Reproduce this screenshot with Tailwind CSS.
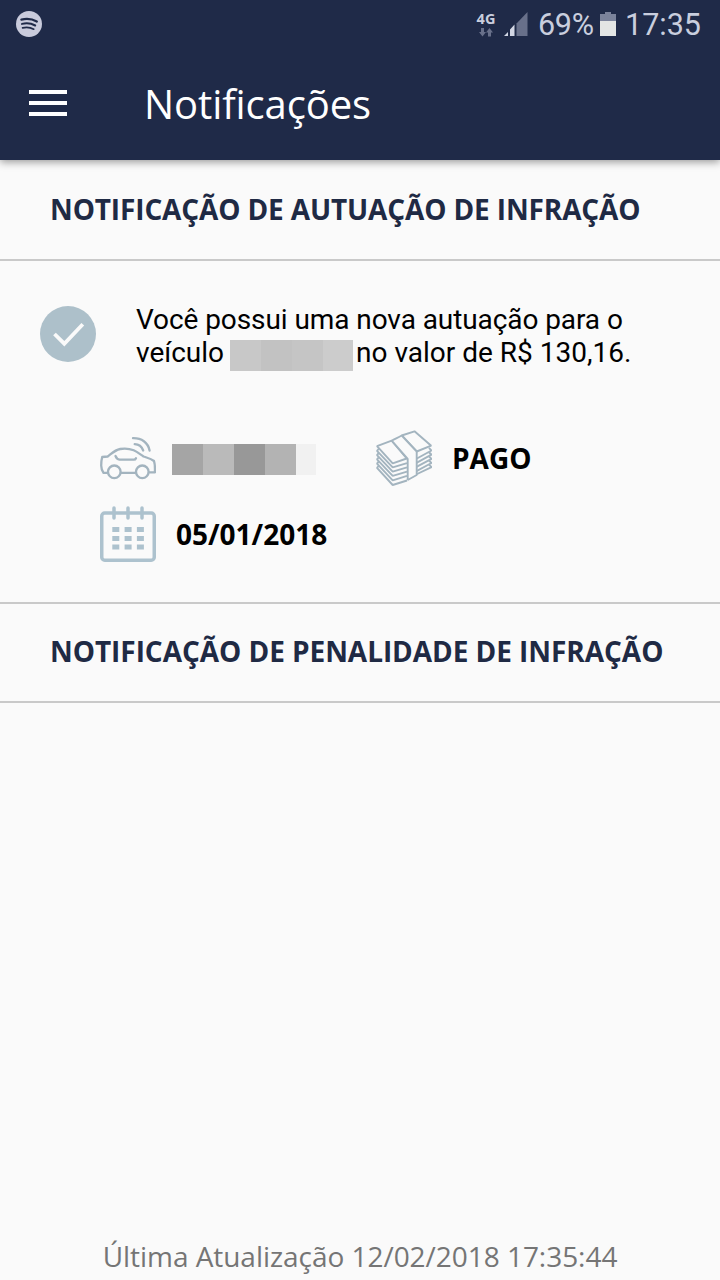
<!DOCTYPE html>
<html lang="pt-BR">
<head>
<meta charset="utf-8">
<title>Notificações</title>
<script src="https://cdn.jsdelivr.net/npm/@tailwindcss/browser@4"></script>
</head>
<body class="bg-[#fafafa]">
<div class="flex h-[1280px] w-[720px] flex-col overflow-hidden bg-[#fafafa] font-['Open_Sans',sans-serif] text-black">
  <header class="z-10 h-40 shrink-0 bg-[#1f2a48] shadow-[0_2px_8px_rgba(0,0,0,0.4)]">
    <div class="flex h-12 items-center justify-between pl-4 pr-[19px] font-['Roboto',sans-serif] text-[#c9cede]">
      <svg class="size-[26px]" viewBox="0 0 26 26" fill="none" stroke="#1f2a48" stroke-linecap="round">
        <circle cx="13" cy="13" r="13" fill="#c9cbdc" stroke="none"/>
        <path d="M5.4 8.6c5.5-1.3 10.6-.8 15.4 1.9" stroke-width="2.3"/>
        <path d="M6 12.9c4.8-1.2 9-.7 13.2 1.6" stroke-width="2"/>
        <path d="M6.6 16.8c4.2-.9 7.8-.5 11.2 1.4" stroke-width="1.7"/>
      </svg>
      <div class="flex h-12 items-center">
        <div class="mr-2 flex w-5 flex-col items-center">
          <span class="text-[14.500px] font-bold leading-[14px] font-['Open_Sans',sans-serif]">4G</span>
          <svg class="mt-[2px] h-[9px] w-[14px]" viewBox="0 0 14 9" fill="#68708a"><path d="M2 0h3v4h2L3.500 8.500 0 4h2zM9 8.500h3v-4h2L10.500 0 7 4.500h2z"/></svg>
        </div>
        <svg class="h-6 w-6" viewBox="0 0 24 24"><path d="M0 24l4-4v4zM6 24v-6.500l4.500-5V24z" fill="#d2d6e4"/><path d="M12.500 24V11.500L23.500 0v24z" fill="#68708a"/></svg>
        <span class="ml-2.5 mt-[2px] w-[56px] whitespace-nowrap text-[30.500px] leading-9 tracking-[-0.3px]">69%</span>
        <svg class="ml-1.5 h-6 w-4" viewBox="0 0 16 24"><path d="M5 0h6v2h5v7H0V2h5z" fill="#7b839b"/><path d="M0 9h16v15H0z" fill="#e3e5e4"/></svg>
        <span class="ml-[9px] mt-[2px] w-[76px] whitespace-nowrap text-[30.500px] leading-9">17:35</span>
      </div>
    </div>
    <div class="flex h-28 items-center pl-[29px]">
      <div class="mb-[2px] flex w-[38px] flex-col gap-[7px]">
        <span class="h-1 bg-white"></span><span class="h-1 bg-white"></span><span class="h-1 bg-white"></span>
      </div>
      <h1 class="ml-[77px] text-[40px] leading-[54px] tracking-[-0.1px] text-white">Notificações</h1>
    </div>
  </header>

  <h2 class="flex h-[101px] shrink-0 items-center border-b-2 border-[#c9c9c9] pb-[2px] pl-[50px] text-[28px] font-bold tracking-[-0.13px] text-[#1f2a44]">NOTIFICAÇÃO DE AUTUAÇÃO DE INFRAÇÃO</h2>

  <section class="h-[343px] shrink-0 border-b-2 border-[#c9c9c9] pl-10 pt-[42px]">
    <div class="flex">
      <svg class="mt-[3px] size-14 shrink-0" viewBox="0 0 56 56" fill="none"><circle cx="28" cy="28" r="28" fill="#adc0ca"/><path d="M14.500 28l9.800 9.700L42.800 18.200" stroke="#fafafa" stroke-width="3.800"/></svg>
      <div class="ml-10 whitespace-nowrap font-['Roboto',sans-serif] text-[28px] leading-[33px]">
        <p class="tracking-[-0.08px]">Você possui uma nova autuação para o</p>
        <p class="flex h-[33px]"><span class="w-[94px]">veículo</span><span class="mt-[4px] flex h-[31px] w-[123px]"><span class="w-[31px] bg-[#c8c8c8]"></span><span class="w-[31px] bg-[#c2c2c2]"></span><span class="w-[31px] bg-[#c5c5c5]"></span><span class="w-[30px] bg-[#cccccc]"></span></span><span class="ml-[3px]">no valor de R$ 130,16.</span></p>
      </div>
    </div>

    <div class="ml-[60px] mt-[60px] flex h-[60px] items-center">
      <svg class="h-[60px] w-14" viewBox="0 0 56 60" fill="none" stroke="#a3b4bf" stroke-width="2.300" stroke-linejoin="round" stroke-linecap="round">
        <path d="M7.500 43.800H3.500C2 41.500 1.200 39 1.200 36.500c0-3 .3-6 1-8.500l5.500-.5c3.500-2.500 7-6.500 12.500-7.500 5-.9 9.500-.3 13.500 1.300 3.500 1.500 6.500 4 9.800 6.200 3.500 1.200 7.500 2 10.500 4.500 1.200 3.500 1 7.500.9 11.300H49M21 43.800h14.500"/>
        <circle cx="14.300" cy="42.800" r="6.300"/><circle cx="42.300" cy="42.800" r="6.300"/>
        <path d="M15.500 27c.8 2 2 3.300 4 3.700H34c1 0 1.600-.6 2-1.500"/>
        <path d="M33 9.200c8.500-.2 15 4.300 16.600 12.300M34.700 15.200c4.300.1 7 2.200 8.500 6.300"/>
      </svg>
      <div class="ml-4 mt-px flex h-[31px] w-36"><span class="w-[31px] bg-[#a5a5a5]"></span><span class="w-[31px] bg-[#bababa]"></span><span class="w-[31px] bg-[#989898]"></span><span class="w-[31px] bg-[#b3b3b3]"></span><span class="w-5 bg-[#f1f1f1]"></span></div>
      <svg class="ml-[60px] h-[60px] w-14" viewBox="0 0 56 60" fill="#fafafa" stroke="#a3b4bf" stroke-width="1.900" stroke-linejoin="bevel">
        <path d="M3 36.500l-2 2.300L16.700 56 31 51.500M39 46l16.500-7.800-2.500-2.500"/>
        <path d="M3 32.200l-2 2.500 15.700 16.600L31 46.800M40 42.300L55.500 34l-2.500-2.500"/>
        <path d="M3 28l-2 2.400 15.700 16.500L31 42.600M40 38.200l15.500-8.300-2.500-2.500"/>
        <path d="M3 23.600l-2 2.500 15.700 16.500L31 38.400M40 34.100l15.500-8.400L53 23.300"/>
        <path d="M3 19.500l-2 2.300 15.700 16.600L31 34.100M40 30l15.500-8.500-2.500-2.700"/>
        <path d="M1 17.200l14.700-5.500L30.700 29.500 16.700 34.300z"/>
        <path d="M25.700 6.500L38.500 2.300 55.200 16.700 40.700 22.500z"/>
        <path d="M15.700 11.700c3.500-2 7-3.200 10-5.200L40.700 22.500V46L31.700 51V30z"/>
      </svg>
      <span class="mb-[2px] ml-5 text-[28px] font-bold">PAGO</span>
    </div>

    <div class="ml-[60px] mt-4 flex h-[58px] items-center">
      <svg class="h-14 w-14" viewBox="0 0 56 56" fill="none" stroke="#adc2ce" stroke-width="3.500" stroke-linecap="round">
        <rect x="1.750" y="7" width="52.500" height="47.250" rx="3"/>
        <path d="M14 2v10M28 2v10M42 2v10"/>
        <path d="M12.300 23.500h32M12.300 32.500h32M12.300 41h32" stroke-width="5" stroke-linecap="butt" stroke-dasharray="7 5.300"/>
      </svg>
      <span class="ml-5 text-[28px] font-bold">05/01/2018</span>
    </div>
  </section>

  <h2 class="flex h-[99px] shrink-0 items-center border-b-2 border-[#c9c9c9] pb-[4px] pl-[50px] text-[28px] font-bold tracking-[-0.05px] text-[#1f2a44]">NOTIFICAÇÃO DE PENALIDADE DE INFRAÇÃO</h2>

  <footer class="mt-auto h-[43px] text-center text-[28px] leading-[38px] tracking-[-0.04px] text-[#757575]">Última Atualização 12/02/2018 17:35:44</footer>
</div>
</body>
</html>
